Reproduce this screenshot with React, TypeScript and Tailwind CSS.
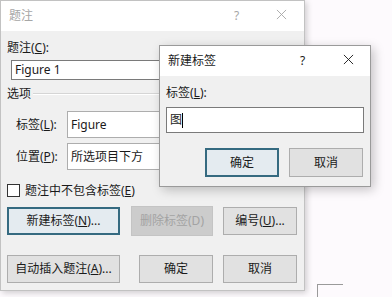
import React from 'react';

const font = { fontFamily: '"Noto Sans", "Noto Sans CJK SC", sans-serif' };

const CloseIcon: React.FC<{ className?: string }> = ({ className }) => (
  <svg viewBox="0 0 12 12" className={className} fill="none" stroke="currentColor" strokeWidth="1">
    <path d="M1 1 L11 11 M11 1 L1 11" />
  </svg>
);

type BtnProps = { children: React.ReactNode; w: string; focused?: boolean; disabled?: boolean; h?: string };

const Btn: React.FC<BtnProps> = ({ children, w, focused, disabled, h = 'h-[28px]' }) => {
  let cls = 'bg-[#e1e1e1] border border-[#adadad] text-[#1a1a1a]';
  if (focused) cls = 'bg-[#e4ebf0] border-2 border-[#356a80] text-[#1a1a1a]';
  if (disabled) cls = 'bg-[#cccccc] border border-[#c4c4c4] text-[#a3a3a3]';
  return <div className={`${w} ${h} ${cls} flex items-center justify-center text-[12px] shrink-0`}>{children}</div>;
};

const TitleBar: React.FC<{ title: string; active?: boolean; qx: string; xx: string }> = ({ title, active, qx, xx }) => (
  <div className="relative h-[30px] bg-white flex items-center pl-[8px] shrink-0">
    <span className={`text-[12px] ${active ? 'text-[#1a1a1a]' : 'text-[#a6a6a6]'}`}>{title}</span>
    <span className={`absolute top-[6px] ${qx} text-[12px] ${active ? 'text-[#1a1a1a]' : 'text-[#a6a6a6]'}`}>?</span>
    <CloseIcon className={`absolute top-[8px] ${xx} w-[11px] h-[11px] ${active ? 'text-[#1a1a1a]' : 'text-[#a6a6a6]'}`} />
  </div>
);

const App: React.FC = () => {
  return (
    <div className="relative w-[392px] h-[297px] bg-[#fdfafd] overflow-hidden text-[#1a1a1a]" style={font}>
      {/* page margin marker */}
      <div className="absolute left-[317px] top-[284px] w-[26px] h-[20px] border-l border-t border-[#9a9a9a]" />

      {/* caption dialog */}
      <div className="absolute left-0 top-0 w-[305px] h-[291px] bg-[#f0f0f0] border border-[#c2c2c2] shadow-[2px_2px_6px_rgba(0,0,0,0.18)] flex flex-col">
        <TitleBar title="题注" qx="left-[233px]" xx="left-[275px]" />
        <div className="flex flex-col px-[6px] text-[12px] leading-[16px]">
          <div className="mt-[9px]">题注(<u>C</u>):</div>
          <div className="mt-[4px] ml-[4px] w-[287px] h-[20px] bg-white border border-[#7a7a7a] flex items-center pl-[3px]">Figure 1</div>
          <div className="mt-[6px] flex items-center gap-[2px]">
            <span>选项</span>
            <div className="flex-1 h-[2px] border-t border-[#d5d5d5] border-b border-b-white" />
          </div>
          <div className="mt-[9px] flex items-center h-[27px]">
            <span className="w-[60px] pl-[9px]">标签(<u>L</u>):</span>
            <div className="w-[231px] h-[27px] bg-white border border-[#adadad] flex items-center pl-[3px]">Figure</div>
          </div>
          <div className="mt-[5px] flex items-center h-[27px]">
            <span className="w-[60px] pl-[9px]">位置(<u>P</u>):</span>
            <div className="w-[231px] h-[27px] bg-white border border-[#adadad] flex items-center pl-[3px]">所选项目下方</div>
          </div>
          <div className="mt-[14px] flex items-center h-[13px] gap-[5px]">
            <div className="w-[13px] h-[13px] bg-white border border-[#333]" />
            <span>题注中不包含标签(<u>E</u>)</span>
          </div>
          <div className="mt-[9px] flex items-center">
            <Btn w="w-[113px]" focused>新建标签(<u>N</u>)...</Btn>
            <div className="w-[11px]" />
            <Btn w="w-[82px]" disabled h="h-[30px]">删除标签(D)</Btn>
            <div className="w-[10px]" />
            <Btn w="w-[74px]">编号(<u>U</u>)...</Btn>
          </div>
          <div className="mt-[19px] flex items-center">
            <Btn w="w-[113px]">自动插入题注(<u>A</u>)...</Btn>
            <div className="w-[19px]" />
            <Btn w="w-[74px]">确定</Btn>
            <div className="w-[10px]" />
            <Btn w="w-[74px]">取消</Btn>
          </div>
        </div>
      </div>

      {/* new label dialog */}
      <div className="absolute left-[159px] top-[45px] w-[212px] h-[142px] bg-[#f0f0f0] border border-[#9a9a9a] shadow-[3px_3px_10px_rgba(0,0,0,0.22)] flex flex-col">
        <TitleBar title="新建标签" active qx="left-[140px]" xx="left-[183px]" />
        <div className="flex flex-col px-[6px] text-[12px] leading-[16px]">
          <div className="mt-[9px]">标签(<u>L</u>):</div>
          <div className="mt-[6px] w-[198px] h-[26px] bg-white border border-[#7a7a7a] flex items-center pl-[3px]">
            <span>图</span>
            <span className="w-px h-[15px] bg-black" />
          </div>
          <div className="mt-[15px] flex items-center">
            <div className="w-[39px]" />
            <Btn w="w-[74px]" h="h-[29px]" focused>确定</Btn>
            <div className="w-[10px]" />
            <Btn w="w-[74px]" h="h-[29px]">取消</Btn>
          </div>
        </div>
      </div>
    </div>
  );
};

export default App;
